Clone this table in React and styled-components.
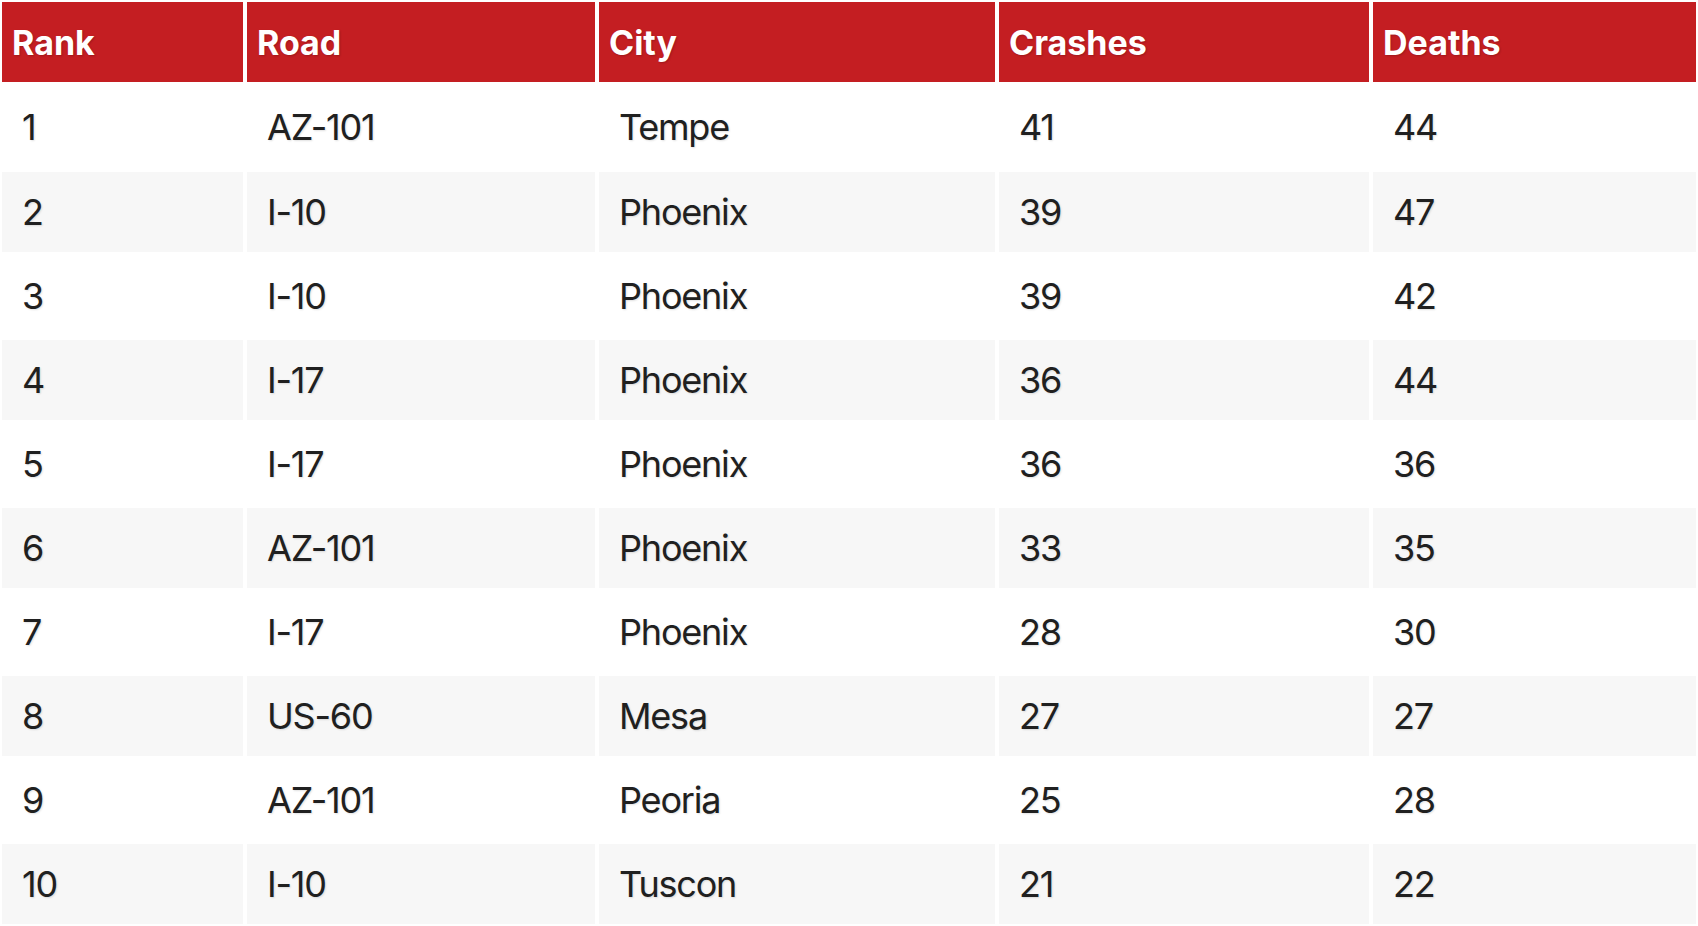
import React from "react";
import styled, { createGlobalStyle } from "styled-components";

const GlobalStyle = createGlobalStyle`
  html, body { margin: 0; padding: 0; background: #ffffff; }
  body { font-family: Inter, "Noto Sans", sans-serif; overflow: hidden; }
`;

const Table = styled.table`
  margin: -2px;
  width: calc(100% + 4px);
  border-collapse: separate;
  border-spacing: 4px;
  table-layout: fixed;
`;

const HeadCell = styled.th`
  height: 80px;
  padding: 0 0 0 10px;
  background: #c41e22;
  color: #ffffff;
  font-family: Inter, sans-serif;
  font-weight: 700;
  font-size: 34px;
  text-align: left;
  text-shadow: 1px 1px 2px rgba(0, 0, 0, 0.2);
  box-sizing: border-box;
`;

const Row = styled.tr`
  background: ${(p) => (p.$striped ? "#f7f7f7" : "#ffffff")};
  &:first-child td { height: 82px; }
`;

const Cell = styled.td`
  height: 80px;
  padding: 0 0 0 20px;
  color: #202020;
  font-family: Inter, sans-serif;
  font-size: 36px;
  font-weight: 400;
  letter-spacing: -1.2px;
  text-shadow: 1px 1px 2px rgba(0, 0, 0, 0.12);
  box-sizing: border-box;
  white-space: nowrap;
`;

const columns = [
  { label: "Rank", width: 241 },
  { label: "Road", width: 348 },
  { label: "City", width: 396 },
  { label: "Crashes", width: 370 },
  { label: "Deaths", width: 323 },
];

const rows = [
  [1, "AZ-101", "Tempe", 41, 44],
  [2, "I-10", "Phoenix", 39, 47],
  [3, "I-10", "Phoenix", 39, 42],
  [4, "I-17", "Phoenix", 36, 44],
  [5, "I-17", "Phoenix", 36, 36],
  [6, "AZ-101", "Phoenix", 33, 35],
  [7, "I-17", "Phoenix", 28, 30],
  [8, "US-60", "Mesa", 27, 27],
  [9, "AZ-101", "Peoria", 25, 28],
  [10, "I-10", "Tuscon", 21, 22],
];

export default function App() {
  return (
    <>
      <GlobalStyle />
      <Table>
        <colgroup>
          {columns.map((c) => (
            <col key={c.label} style={{ width: c.width }} />
          ))}
        </colgroup>
        <thead>
          <tr>
            {columns.map((c) => (
              <HeadCell key={c.label}>{c.label}</HeadCell>
            ))}
          </tr>
        </thead>
        <tbody>
          {rows.map((r, i) => (
            <Row key={i} $striped={i % 2 === 1}>
              {r.map((v, j) => (
                <Cell key={j}>{v}</Cell>
              ))}
            </Row>
          ))}
        </tbody>
      </Table>
    </>
  );
}
